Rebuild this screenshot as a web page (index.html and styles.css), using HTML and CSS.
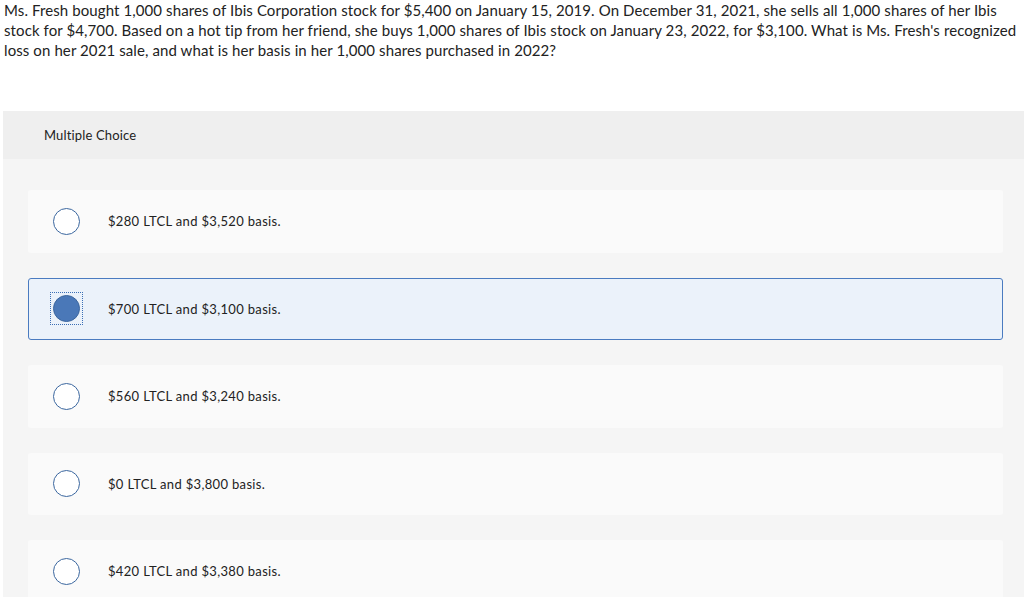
FILE: index.html
```html
<!DOCTYPE html>
<html>
<head>
<meta charset="utf-8">
<link rel="stylesheet" href="styles.css">
</head>
<body>
<p class="question">Ms. Fresh bought 1,000 shares of Ibis Corporation stock for $5,400 on January 15, 2019. On December 31, 2021, she sells all 1,000 shares of her Ibis stock for $4,700. Based on a hot tip from her friend, she buys 1,000 shares of Ibis stock on January 23, 2022, for $3,100. What is Ms. Fresh's recognized loss on her 2021 sale, and what is her basis in her 1,000 shares purchased in 2022?</p>
<div class="panel">
  <div class="panel-head">Multiple Choice</div>
  <div class="panel-body">
    <div class="option"><span class="radio"></span><span class="label">$280 LTCL and $3,520 basis.</span></div>
    <div class="option selected"><span class="focus"><span class="radio checked"></span></span><span class="label">$700 LTCL and $3,100 basis.</span></div>
    <div class="option"><span class="radio"></span><span class="label">$560 LTCL and $3,240 basis.</span></div>
    <div class="option"><span class="radio"></span><span class="label">$0 LTCL and $3,800 basis.</span></div>
    <div class="option"><span class="radio"></span><span class="label">$420 LTCL and $3,380 basis.</span></div>
  </div>
</div>
</body>
</html>
```
FILE: styles.css
```css
html, body {
  margin: 0;
  padding: 0;
  background: #ffffff;
  overflow: hidden;
}
body {
  font-family: "Lato", "Open Sans", sans-serif;
  color: #222222;
}
.question {
  margin: 0;
  padding: 0 4px;
  font-size: 15px;
  line-height: 20px;
  letter-spacing: 0.1px;
  height: 111px;
  box-sizing: border-box;
}
.panel {
  margin-left: 3px;
  background: #f5f5f5;
}
.panel-head {
  background: #efefef;
  height: 48px;
  display: flex;
  align-items: center;
  padding-left: 41px;
  font-size: 13px;
  letter-spacing: 0.15px;
  color: #222;
}
.panel-body {
  padding: 31px 21px 20px 25px;
  display: flex;
  flex-direction: column;
  gap: 25px;
}
.option {
  height: 62.5px;
  background: #fafafa;
  border-radius: 3px;
  display: flex;
  align-items: center;
  padding-left: 24px;
  box-sizing: border-box;
  border: 1px solid transparent;
}
.option.selected {
  background: #ebf2fa;
  border-color: #4a7bc0;
}
.radio {
  width: 27px;
  height: 27px;
  box-sizing: border-box;
  border-radius: 50%;
  border: 1.5px solid #3b679f;
  background: #ffffff;
  flex: none;
}
.radio.checked {
  background: #4a78b8;
  border-color: #3b669e;
}
.focus {
  display: flex;
  margin-left: -3px;
  margin-right: -3px;
  padding: 2px;
  border: 1px dotted #3b6fb5;
}
.label {
  margin-left: 28px;
  font-size: 13px;
  letter-spacing: 0.33px;
  color: #222;
}
```
